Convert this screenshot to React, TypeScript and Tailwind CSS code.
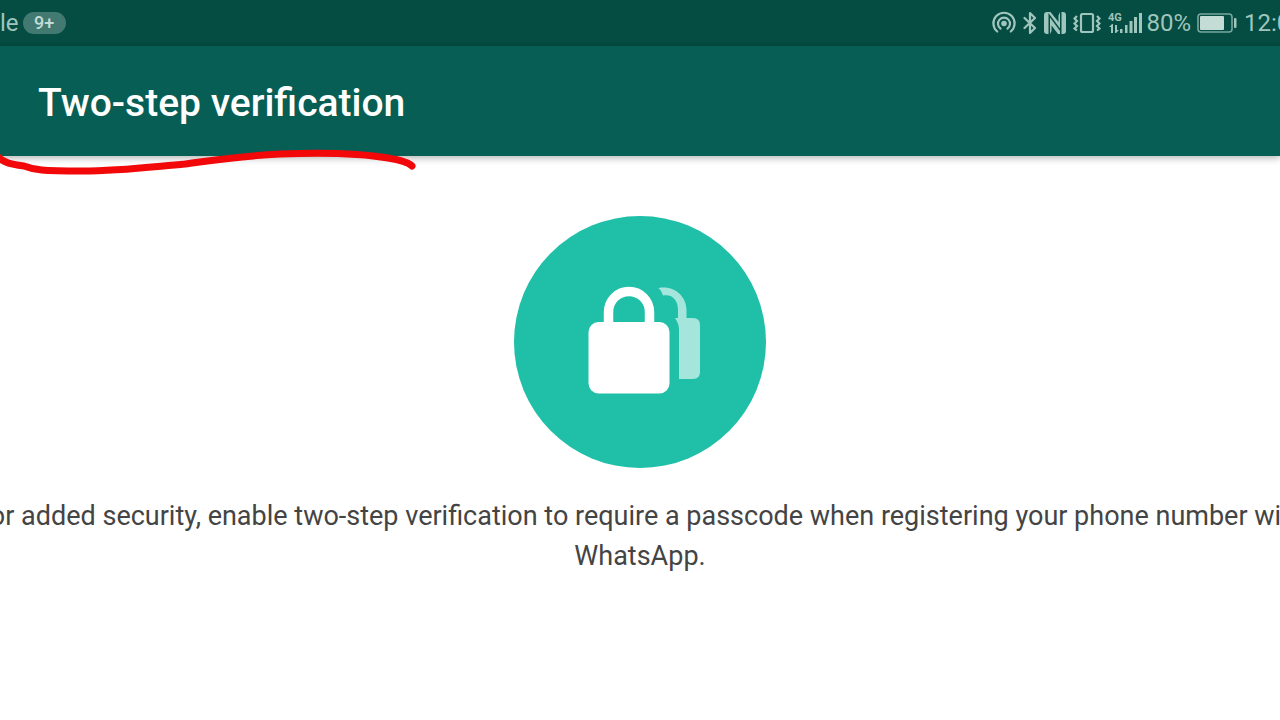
function HotspotIcon() {
  return (
    <svg width="24" height="24" viewBox="0 0 24 24" fill="none" stroke="currentColor" strokeWidth="2.2" strokeLinecap="round" aria-hidden="true">
      <circle cx="12" cy="12.500" r="2.800" fill="currentColor" stroke="none" />
      <path d="M8.500 17.500a6 6 0 1 1 7 0" />
      <path d="M5.200 20.500a10.600 10.600 0 1 1 13.600 0" />
    </svg>
  );
}

function BluetoothIcon() {
  return (
    <svg width="14" height="24" viewBox="0 0 14 24" fill="none" stroke="currentColor" strokeWidth="2.2" strokeLinejoin="round" strokeLinecap="round" aria-hidden="true">
      <path d="M1.500 7 12 17l-5 5V2l5 5L1.500 17" />
    </svg>
  );
}

function NfcIcon() {
  return (
    <svg width="22" height="24" viewBox="0 0 22 24" fill="currentColor" aria-hidden="true">
      <path d="M3 1H6.500L14.500 11V4.500L16 1H19q3 0 3 3V20q0 3-3 3H17.500V1H16V17.500L4.500 2V23H3q-3 0-3-3V4q0-3 3-3z" />
      <path d="M6 6.500 16 20V23H14L7.500 14.500V20L6 23z" />
    </svg>
  );
}

function VibrateIcon() {
  return (
    <svg width="28" height="24" viewBox="0 0 28 24" fill="none" stroke="currentColor" strokeWidth="2.2" aria-hidden="true">
      <rect x="8" y="3" width="12" height="18" rx="1.500" />
      <path d="M4 5 1.500 7.500 4 10 1.500 12.500 4 15l-2.500 2.500L4 19.500" />
      <path d="M24 5l2.500 2.500L24 10l2.500 2.500L24 15l2.500 2.500L24 19.500" />
    </svg>
  );
}

function SignalIcon() {
  return (
    <svg width="36" height="24" viewBox="0 0 36 24" fill="currentColor" aria-hidden="true">
      <text x="0" y="10" fontFamily="Roboto, sans-serif" fontSize="11" fontWeight="700">4G</text>
      <path d="M3 22V16H1L4 13H5V22zM7 14h2v5H11l-3 3H7z" />
      <rect x="12" y="18" width="2.500" height="4" />
      <rect x="17" y="14" width="2.500" height="8" />
      <rect x="21.500" y="10" width="3" height="12" />
      <rect x="26" y="6" width="3" height="16" />
      <rect x="31" y="2" width="3" height="20" />
    </svg>
  );
}

function BatteryIcon() {
  return (
    <svg width="40" height="24" viewBox="0 0 40 24" aria-hidden="true">
      <rect x="1" y="3" width="34" height="18" rx="3" fill="none" stroke="currentColor" strokeWidth="1.600" opacity="0.75" />
      <rect x="3" y="5" width="24" height="14" rx="1" fill="#c3dcd6" />
      <rect x="37" y="7" width="2.500" height="10" rx="1" fill="currentColor" />
    </svg>
  );
}

function StatusBar() {
  return (
    <div className="flex h-[46px] items-center overflow-hidden bg-[#054c42] text-2xl text-[#9fc5bc]">
      <span>le</span>
      <span className="ml-1 flex h-[22px] w-[43px] items-center justify-center rounded-full bg-[#427a72] text-lg font-medium text-[#c3dcd6]">
        9+
      </span>
      <div className="ml-auto flex items-center">
        <div className="flex items-center gap-[7px]">
          <HotspotIcon />
          <BluetoothIcon />
          <NfcIcon />
          <VibrateIcon />
          <SignalIcon />
        </div>
        <span className="ml-[2px]">80%</span>
        <span className="ml-[6px]">
          <BatteryIcon />
        </span>
        <span className="ml-[7px] w-9 whitespace-nowrap">12:0</span>
      </div>
    </div>
  );
}

// Red pen stroke under the title
function Underline() {
  return (
    <svg className="absolute top-[100px] left-0" width="420" height="80" viewBox="0 0 420 80" fill="none" aria-hidden="true">
      <path
        d="M-3 10C4 17 10 18 24 20C34 24 42 25 82 25C120 25 150 21 185 18C215 14 240 10 280 8C330 6 365 8 388 12C400 14 408 16 412 20"
        stroke="#f20808"
        strokeWidth="7"
        strokeLinecap="round"
        strokeLinejoin="round"
      />
    </svg>
  );
}

function LockBadge() {
  return (
    <svg width="252" height="252" viewBox="0 0 252 252" role="img" aria-label="Two locks">
      <circle cx="126" cy="126" r="126" fill="#1fbfa8" />
      <path
        d="M144.500 72C160 69 172.500 80 172.500 94v8H179q7 0 7 7v47q0 7-7 7h-14V113q0-5-4-11h3V94C164 84 158 77.500 149 79.500q-1-4.500-4.500-7.500z"
        fill="#a5e6dc"
      />
      <path d="M94.500 108V96a20.500 20.500 0 0 1 41 0v12" fill="none" stroke="#fff" strokeWidth="9.500" />
      <rect x="74.500" y="106" width="81" height="71.500" rx="10" fill="#fff" />
    </svg>
  );
}

export default function App() {
  return (
    <div className="min-h-screen overflow-hidden bg-white font-[Roboto,sans-serif]">
      <StatusBar />
      <header className="relative flex h-[110px] items-center bg-[#075e54] px-[38px] pt-1 shadow-[0_2px_7px_rgba(0,0,0,0.3)]">
        <h1 className="text-[39px] leading-[48px] font-medium text-white">Two-step verification</h1>
        <Underline />
      </header>
      <main className="flex flex-col items-center pt-[60px]">
        <LockBadge />
        <p className="mt-7 text-center text-[27px] leading-10 whitespace-nowrap text-[#444]">
          For added security, enable two-step verification to require a passcode when registering your phone number with
          <br />
          WhatsApp.
        </p>
      </main>
    </div>
  );
}
